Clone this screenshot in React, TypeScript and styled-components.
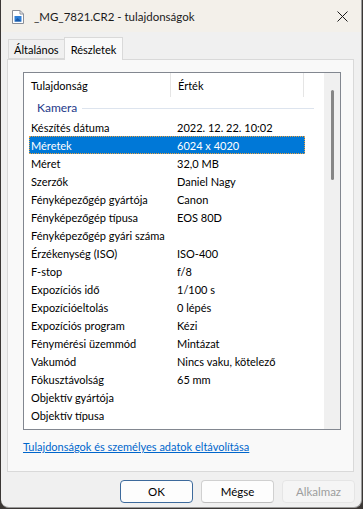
import React from 'react';
import styled, { createGlobalStyle } from 'styled-components';

const GlobalStyle = createGlobalStyle`
  html, body {
    margin: 0;
    padding: 0;
    background: #3b3735;
  }
  body {
    font-family: 'Segoe UI', Lato, 'Noto Sans', sans-serif;
    font-size: 11px;
    color: #000;
  }
`;

const rows: [string, string][] = [
  ['Készítés dátuma', '2022. 12. 22. 10:02'],
  ['Méretek', '6024 x 4020'],
  ['Méret', '32,0 MB'],
  ['Szerzők', 'Daniel Nagy'],
  ['Fényképezőgép gyártója', 'Canon'],
  ['Fényképezőgép típusa', 'EOS 80D'],
  ['Fényképezőgép gyári száma', ''],
  ['Érzékenység (ISO)', 'ISO-400'],
  ['F-stop', 'f/8'],
  ['Expozíciós idő', '1/100 s'],
  ['Expozícióeltolás', '0 lépés'],
  ['Expozíciós program', 'Kézi'],
  ['Fénymérési üzemmód', 'Mintázat'],
  ['Vakumód', 'Nincs vaku, kötelező'],
  ['Fókusztávolság', '65 mm'],
  ['Objektív gyártója', ''],
  ['Objektív típusa', ''],
];

function FileIcon() {
  return (
    <svg width="12" height="14" viewBox="0 0 12 14">
      <path d="M0.5 0.5 H8 L11.5 4 V13.5 H0.5 Z" fill="#fff" stroke="#8a8f99" />
      <path d="M8 0.5 V4 H11.5" fill="none" stroke="#8a8f99" />
      <rect x="2.5" y="6" width="7" height="5.5" fill="#2f7fd6" />
      <path d="M2.5 11.5 L5.5 8 L9.5 11.5 Z" fill="#1a5aa8" />
    </svg>
  );
}

function CloseIcon() {
  return (
    <svg width="11" height="11" viewBox="0 0 11 11">
      <path d="M0.5 0.5 L10.5 10.5 M10.5 0.5 L0.5 10.5" stroke="#1a1a1a" strokeWidth="1" />
    </svg>
  );
}

export default function App() {
  return (
    <>
      <GlobalStyle />
      <Window>
        <TitleBar>
          <TitleLeft>
            <FileIcon />
            <span>_MG_7821.CR2 - tulajdonságok</span>
          </TitleLeft>
          <CloseButton>
            <CloseIcon />
          </CloseButton>
        </TitleBar>

        <Body>
          <TabRow>
            <Tab>Általános</Tab>
            <Tab active>Részletek</Tab>
          </TabRow>
          <Panel>
            <ListBox>
              <ListContent>
                <HeaderRow>
                  <HeaderCell width={147}>Tulajdonság</HeaderCell>
                  <HeaderCell width={133}>Érték</HeaderCell>
                </HeaderRow>
                <GroupRow>
                  <span>Kamera</span>
                  <GroupLine />
                </GroupRow>
                {rows.map(([name, value], i) => (
                  <Row key={name} selected={i === 1}>
                    <NameCell>{name}</NameCell>
                    <ValueCell>{value}</ValueCell>
                  </Row>
                ))}
              </ListContent>
              <ScrollTrack>
                <ScrollThumb />
              </ScrollTrack>
            </ListBox>
            <LinkRow>
              <RemoveLink href="#">Tulajdonságok és személyes adatok eltávolítása</RemoveLink>
            </LinkRow>
          </Panel>
          <ButtonRow>
            <Button primary>OK</Button>
            <Button>Mégse</Button>
            <Button disabled>Alkalmaz</Button>
          </ButtonRow>
        </Body>
      </Window>
    </>
  );
}

const Window = styled.div`
  width: 360px;
  height: 507px;
  margin-left: 1px;
  background: #f0f0f0;
  border-right: 1px solid #9a9a9a;
  border-bottom: 1px solid #9a9a9a;
  border-radius: 0 0 8px 8px;
  overflow: hidden;
  display: flex;
  flex-direction: column;
`;

const TitleBar = styled.div`
  height: 32px;
  background: #f3f0ea;
  display: flex;
  align-items: center;
  justify-content: space-between;
`;

const TitleLeft = styled.div`
  display: flex;
  align-items: center;
  gap: 10px;
  padding-left: 11px;
  font-size: 11.5px;
  color: #1a1a1a;

  > svg {
    margin-top: 1px;
  }
`;

const CloseButton = styled.div`
  width: 46px;
  height: 32px;
  display: flex;
  align-items: center;
  justify-content: center;
  margin-right: -4px;
`;

const Body = styled.div`
  flex: 1;
  display: flex;
  flex-direction: column;
  padding: 4px 6px 0 6px;
`;

const TabRow = styled.div`
  display: flex;
  align-items: flex-end;
  height: 23px;
  padding-left: 1px;
  position: relative;
  z-index: 1;
`;

const Tab = styled.div<{ active?: boolean }>`
  box-sizing: border-box;
  height: ${(p) => (p.active ? '23px' : '20px')};
  margin-bottom: ${(p) => (p.active ? '-1px' : '0')};
  padding: ${(p) => (p.active ? '1px 6px 0 6px' : '0 5px 0 5px')};
  display: flex;
  align-items: center;
  background: ${(p) => (p.active ? '#f9f9f9' : '#f0f0f0')};
  border: 1px solid #d9d9d9;
  border-bottom: ${(p) => (p.active ? 'none' : '1px solid #d9d9d9')};
  margin-right: ${(p) => (p.active ? '0' : '-1px')};
  color: #000;
`;

const Panel = styled.div`
  box-sizing: border-box;
  width: 347px;
  height: 413px;
  background: #f9f9f9;
  border: 1px solid #d9d9d9;
  padding: 12px 0 0 15px;
  display: flex;
  flex-direction: column;
`;

const ListBox = styled.div`
  box-sizing: border-box;
  width: 318px;
  height: 358px;
  border: 1px solid #828790;
  background: #fff;
  display: flex;
  overflow: hidden;
`;

const ListContent = styled.div`
  flex: 1;
  display: flex;
  flex-direction: column;
`;

const HeaderRow = styled.div`
  display: flex;
  height: 24px;
  flex-shrink: 0;
`;

const HeaderCell = styled.div<{ width: number }>`
  box-sizing: border-box;
  width: ${(p) => p.width}px;
  padding-left: 7px;
  display: flex;
  align-items: center;
  border-right: 1px solid #e5e5e5;
  color: #000;
`;

const GroupRow = styled.div`
  height: 21px;
  display: flex;
  align-items: center;
  gap: 5px;
  padding: 0 10px 0 13px;
  color: #1e3a8a;
  font-size: 12px;
  flex-shrink: 0;
`;

const GroupLine = styled.div`
  flex: 1;
  height: 1px;
  background: #dde4ee;
  margin-top: 1px;
`;

const Row = styled.div<{ selected?: boolean }>`
  box-sizing: border-box;
  width: 276px;
  height: 18px;
  margin-left: 5px;
  display: flex;
  align-items: center;
  flex-shrink: 0;
  background: ${(p) => (p.selected ? '#0078d7' : 'transparent')};
  color: ${(p) => (p.selected ? '#fff' : '#000')};
  outline: ${(p) => (p.selected ? '1px dotted #e8a040' : 'none')};
  outline-offset: -1px;
`;

const NameCell = styled.div`
  width: 148px;
  padding-left: 2px;
  box-sizing: border-box;
  white-space: nowrap;
`;

const ValueCell = styled.div`
  white-space: nowrap;
`;

const ScrollTrack = styled.div`
  width: 16px;
  background: #f0f0f0;
  display: flex;
  justify-content: center;
  padding-top: 17px;
  box-sizing: border-box;
`;

const ScrollThumb = styled.div`
  width: 3px;
  height: 90px;
  border-radius: 2px;
  background: #868686;
`;

const LinkRow = styled.div`
  display: flex;
  margin-top: 10px;
`;

const RemoveLink = styled.a`
  color: #0066cc;
  text-decoration: underline;
  font-size: 11px;
  white-space: nowrap;
`;

const ButtonRow = styled.div`
  display: flex;
  justify-content: flex-end;
  gap: 8px;
  padding: 8px 0 0 0;
`;

const Button = styled.button<{ primary?: boolean }>`
  box-sizing: border-box;
  width: 73px;
  height: 23px;
  border-radius: 4px;
  font-family: inherit;
  font-size: 11.5px;
  background: ${(p) => (p.disabled ? '#f5f5f5' : '#fdfdfd')};
  color: ${(p) => (p.disabled ? '#9d9d9d' : '#000')};
  border: 1px solid ${(p) => (p.primary ? '#3d6a9c' : p.disabled ? '#e5e5e5' : '#d0d0d0')};
  border-bottom-color: ${(p) => (p.primary ? '#3d6a9c' : p.disabled ? '#e5e5e5' : '#bdbdbd')};
  padding: 0;
`;
